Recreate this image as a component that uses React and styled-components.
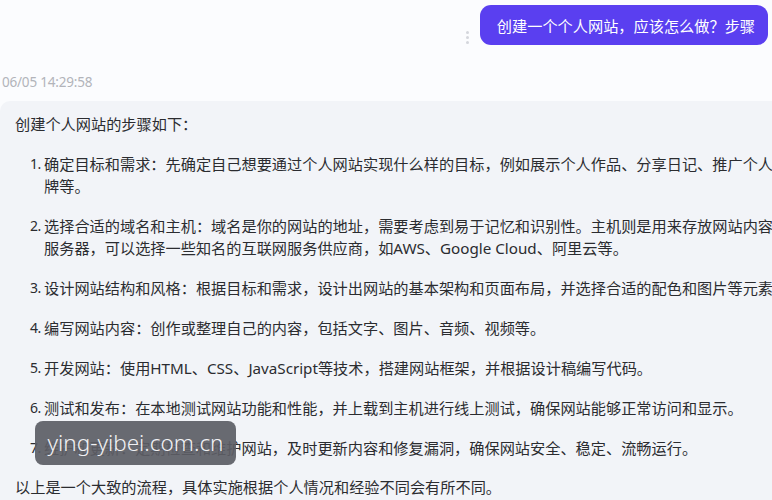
import React from "react";
import styled, { createGlobalStyle } from "styled-components";

const Global = createGlobalStyle`
  html, body { margin: 0; padding: 0; overflow: hidden; background: #fbfcfe; }
  body { font-family: "Noto Sans", "Noto Sans CJK SC", sans-serif; }
`;

const Page = styled.div`
  width: 772px;
  height: 500px;
  overflow: hidden;
  display: flex;
  flex-direction: column;
  padding-top: 5px;
  box-sizing: border-box;
`;

const UserRow = styled.div`
  display: flex;
  justify-content: flex-end;
  align-items: flex-end;
  gap: 11px;
  padding-right: 4px;
`;

const Dots = styled.div`
  display: flex;
  flex-direction: column;
  gap: 2px;
  padding-bottom: 1px;
  span {
    width: 3px;
    height: 3px;
    border-radius: 50%;
    background: #d4d6dc;
  }
`;

const UserBubble = styled.div`
  background: #5a3ff0;
  color: #fff;
  border-radius: 11px;
  height: 40px;
  display: flex;
  align-items: center;
  padding: 0 13px 0 17px;
  font-size: 15.2px;
  font-family: "Noto Sans CJK SC", sans-serif;
`;

const Stamp = styled.div`
  margin-top: 28px;
  padding-left: 2px;
  font-size: 13.5px;
  line-height: 18px;
  color: #b2b4ba;
  letter-spacing: -0.2px;
`;

const Answer = styled.div`
  margin-top: 10px;
  width: 810px;
  flex-shrink: 0;
  background: #f2f4f8;
  border-radius: 10px;
  padding: 12px 15px 20px 15px;
  box-sizing: border-box;
  color: #2b2c30;
  font-size: 15.2px;
  line-height: 22px;
  font-family: "Noto Sans", "Noto Sans CJK SC", sans-serif;
`;

const Para = styled.p`
  margin: 0;
`;

const List = styled.ol`
  list-style: none;
  margin: 18px 0 17px;
  padding: 0 0 0 15px;
  display: flex;
  flex-direction: column;
  gap: 18px;
`;

const Item = styled.li`
  display: grid;
  grid-template-columns: 14px 1fr;
`;

const Num = styled.span`
  font-size: 14px;
  letter-spacing: -0.5px;
`;

const Watermark = styled.div`
  position: absolute;
  left: 35px;
  top: 421px;
  width: 201px;
  height: 44px;
  border-radius: 8px;
  background: rgba(92, 93, 101, 0.92);
  color: #f1f1f4;
  font-family: "Noto Sans", sans-serif;
  font-size: 22.5px;
  font-weight: 300;
  display: flex;
  align-items: center;
  justify-content: center;
  padding-bottom: 2px;
  box-sizing: border-box;
`;

const items = [
  "确定目标和需求：先确定自己想要通过个人网站实现什么样的目标，例如展示个人作品、分享日记、推广个人品牌等。",
  "选择合适的域名和主机：域名是你的网站的地址，需要考虑到易于记忆和识别性。主机则是用来存放网站内容的服务器，可以选择一些知名的互联网服务供应商，如AWS、Google Cloud、阿里云等。",
  "设计网站结构和风格：根据目标和需求，设计出网站的基本架构和页面布局，并选择合适的配色和图片等元素。",
  "编写网站内容：创作或整理自己的内容，包括文字、图片、音频、视频等。",
  "开发网站：使用HTML、CSS、JavaScript等技术，搭建网站框架，并根据设计稿编写代码。",
  "测试和发布：在本地测试网站功能和性能，并上载到主机进行线上测试，确保网站能够正常访问和显示。",
  "维护和更新：定期检查和维护网站，及时更新内容和修复漏洞，确保网站安全、稳定、流畅运行。",
];

export default function App() {
  return (
    <>
      <Global />
      <Page>
        <UserRow>
          <Dots>
            <span />
            <span />
            <span />
          </Dots>
          <UserBubble>创建一个个人网站，应该怎么做？步骤</UserBubble>
        </UserRow>
        <Stamp>06/05 14:29:58</Stamp>
        <Answer>
          <Para>创建个人网站的步骤如下：</Para>
          <List>
            {items.map((t, i) => (
              <Item key={i}>
                <Num>{i + 1}.</Num>
                <span>{t}</span>
              </Item>
            ))}
          </List>
          <Para>以上是一个大致的流程，具体实施根据个人情况和经验不同会有所不同。</Para>
        </Answer>
      </Page>
      <Watermark>ying-yibei.com.cn</Watermark>
    </>
  );
}
